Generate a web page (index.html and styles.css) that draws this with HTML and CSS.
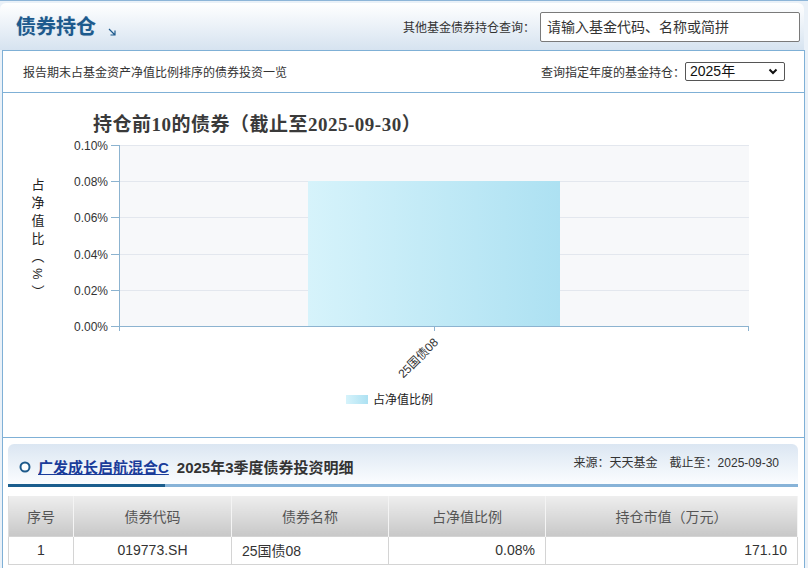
FILE: index.html
```html
<!DOCTYPE html>
<html lang="zh-CN">
<head>
<meta charset="utf-8">
<title>债券持仓</title>
<link rel="stylesheet" href="styles.css">
</head>
<body>
<div class="page">
  <div class="topbar">
    <h1 class="title">债券持仓<svg class="title-arrow" width="8" height="8" viewBox="0 0 8 8"><path d="M1 1 L6.5 6.5 M7 2.5 V7 H2.5" fill="none" stroke="#1d5a8d" stroke-width="1.2"/></svg></h1>
    <div class="search">
      <label class="search-label">其他基金债券持仓查询：</label>
      <input class="search-input" type="text" placeholder="请输入基金代码、名称或简拼">
    </div>
  </div>
  <div class="box">
    <div class="infobar">
      <span class="info-text">报告期末占基金资产净值比例排序的债券投资一览</span>
      <div class="year-query">
        <span class="info-text">查询指定年度的基金持仓：</span>
        <span class="select-wrap">
          <select class="year-select"><option>2025年</option></select>
          <svg class="select-arrow" width="10" height="7" viewBox="0 0 10 7"><path d="M1.5 1.5 L5 5 L8.5 1.5" fill="none" stroke="#111" stroke-width="2"/></svg>
        </span>
      </div>
    </div>
    <div class="chart">
      <svg class="chart-svg" width="801" height="344" viewBox="3 93 801 344">
        <defs>
          <linearGradient id="barGrad" x1="0" x2="1" y1="0" y2="0">
            <stop offset="0" stop-color="#d6f3fb"/>
            <stop offset="1" stop-color="#ade1f2"/>
          </linearGradient>
        </defs>
        <text class="ctitle" x="93" y="131">持仓前10的债券（截止至2025-09-30）</text>
        <rect x="119" y="145" width="630" height="181" fill="#f7f8fa"/>
        <g stroke="#e3e7ee" stroke-width="1">
          <line x1="119" x2="749" y1="145.5" y2="145.5"/>
          <line x1="119" x2="749" y1="181.5" y2="181.5"/>
          <line x1="119" x2="749" y1="217.5" y2="217.5"/>
          <line x1="119" x2="749" y1="254.5" y2="254.5"/>
          <line x1="119" x2="749" y1="290.5" y2="290.5"/>
        </g>
        <rect x="308" y="181" width="252" height="145" fill="url(#barGrad)"/>
        <g stroke="#8cb3d0" stroke-width="1">
          <line x1="119.5" x2="119.5" y1="145" y2="327"/>
          <line x1="119" x2="749" y1="326.5" y2="326.5"/>
          <line x1="111" x2="119" y1="145.5" y2="145.5"/>
          <line x1="111" x2="119" y1="181.5" y2="181.5"/>
          <line x1="111" x2="119" y1="217.5" y2="217.5"/>
          <line x1="111" x2="119" y1="254.5" y2="254.5"/>
          <line x1="111" x2="119" y1="290.5" y2="290.5"/>
          <line x1="111" x2="119" y1="326.5" y2="326.5"/>
          <line x1="119.5" x2="119.5" y1="326" y2="331"/>
          <line x1="434.5" x2="434.5" y1="326" y2="331"/>
          <line x1="748.5" x2="748.5" y1="326" y2="331"/>
        </g>
        <g class="ylabels">
          <text x="108" y="150">0.10%</text>
          <text x="108" y="186">0.08%</text>
          <text x="108" y="222">0.06%</text>
          <text x="108" y="259">0.04%</text>
          <text x="108" y="295">0.02%</text>
          <text x="108" y="331">0.00%</text>
        </g>
        <text class="ytitle" x="37" y="178">占净值比（%）</text>
        <text class="xlabel" x="439" y="343" transform="rotate(-45 439 343)">25国债08</text>
        <rect x="346" y="395" width="22" height="9" fill="url(#barGrad)"/>
        <text class="legend" x="373" y="404">占净值比例</text>
      </svg>
    </div>
    <div class="detail">
      <div class="detail-head">
        <div class="dh-left">
          <svg class="dh-icon" width="12" height="12" viewBox="0 0 12 12"><circle cx="6" cy="6" r="4.5" fill="#fff" stroke="#1e5a8b" stroke-width="2"/></svg>
          <a class="fund-link" href="#">广发成长启航混合C</a>
          <span class="dh-title">2025年3季度债券投资明细</span>
        </div>
        <div class="dh-right">来源：天天基金　截止至：2025-09-30</div>
      </div>
      <div class="dh-bar"><span class="dh-bar-dark"></span></div>
      <table class="bond-table">
        <colgroup>
          <col class="c1"><col class="c2"><col class="c3"><col class="c4"><col class="c5">
        </colgroup>
        <thead>
          <tr><th>序号</th><th>债券代码</th><th>债券名称</th><th>占净值比例</th><th>持仓市值（万元）</th></tr>
        </thead>
        <tbody>
          <tr><td class="center">1</td><td class="center">019773.SH</td><td class="left">25国债08</td><td class="right">0.08%</td><td class="right">171.10</td></tr>
        </tbody>
      </table>
    </div>
  </div>
</div>
</body>
</html>
```
FILE: styles.css
```css
* { box-sizing: border-box; }
html, body { margin: 0; padding: 0; }
body {
  width: 808px;
  height: 568px;
  overflow: hidden;
  background: #eaf1f8;
  font-family: "Liberation Sans", "Noto Sans CJK SC", sans-serif;
  color: #333;
}
.page {
  border-top: 1px solid #8db5d8;
  padding-top: 2px;
}
.topbar {
  height: 47px;
  margin-right: 4px;
  border-radius: 6px 6px 0 0;
  background: linear-gradient(#ffffff, #d6e3f0);
  display: flex;
  align-items: center;
  justify-content: space-between;
  padding-left: 16px;
}
.title {
  margin: 0;
  font-size: 20px;
  line-height: 24px;
  font-weight: bold;
  color: #1d5a8d;
  display: flex;
  align-items: flex-end;
  text-shadow: 0 0 1px rgba(29, 90, 141, 0.3);
}
.title-arrow { margin: 0 0 3px 12px; }
.search { display: flex; align-items: center; }
.search-label { font-size: 12px; color: #333; }
.search-input {
  width: 260px;
  height: 30px;
  margin-left: 5px;
  margin-right: 4px;
  border: 1px solid #7a7a7a;
  border-radius: 2px;
  padding: 0 6px;
  font-size: 14px;
  font-family: "Liberation Sans", "Noto Sans CJK SC", sans-serif;
  background: #fff;
}
.search-input::placeholder { color: #333; }
.box {
  margin-left: 2px;
  width: 803px;
  border: 1px solid #7fb0d6;
  border-bottom: none;
  background: #fff;
  height: 518px;
}
.infobar {
  height: 42px;
  border-bottom: 1px solid #7fb0d6;
  display: flex;
  align-items: center;
  justify-content: space-between;
  padding: 0 19px 0 20px;
}
.info-text { font-size: 12px; color: #333; }
.year-query { display: flex; align-items: center; }
.select-wrap { position: relative; display: inline-block; width: 100px; height: 19px; }
.year-select {
  appearance: none;
  -webkit-appearance: none;
  width: 100px;
  height: 19px;
  border: 1px solid #555;
  border-radius: 2px;
  background: #fff;
  font-size: 14px;
  line-height: 17px;
  padding: 0 0 0 4px;
  font-family: "Liberation Sans", "Noto Sans CJK SC", sans-serif;
  color: #111;
}
.select-arrow { position: absolute; right: 7px; top: 6px; pointer-events: none; }
.chart { border-bottom: 1px solid #7fb0d6; height: 345px; }
.chart-svg { display: block; }
.ctitle {
  font-family: "Liberation Serif", "Noto Sans CJK SC", serif;
  font-weight: bold;
  font-size: 19px;
  letter-spacing: 0.5px;
  fill: #3a3a3a;
}
.ylabels text {
  font-size: 12px;
  text-anchor: end;
  fill: #333;
}
.ytitle {
  writing-mode: vertical-rl;
  font-size: 13px;
  letter-spacing: 5px;
  fill: #222;
}
.xlabel { font-size: 12px; text-anchor: end; fill: #333; }
.legend { font-size: 12px; fill: #222; }
.detail { margin: 6px 6px 0 5px; }
.detail-head {
  height: 40px;
  border-radius: 6px 6px 0 0;
  background: linear-gradient(#dbe6f2, #fbfdff);
  display: flex;
  justify-content: space-between;
  align-items: center;
  padding: 0 19px 0 11px;
}
.dh-left { display: flex; align-items: center; padding-top: 5px; }
.dh-icon { display: block; }
.fund-link {
  margin-left: 7px;
  font-size: 15px;
  font-weight: bold;
  color: #1a3c9a;
  text-decoration: underline;
}
.dh-title { margin-left: 8px; font-size: 15px; font-weight: bold; color: #333; }
.dh-right { font-size: 12px; color: #333; padding-bottom: 5px; }
.dh-bar { height: 3px; background: #87b3d8; display: flex; }
.dh-bar-dark { width: 157px; background: #1b5e8e; }
.bond-table {
  margin-top: 9px;
  width: 789px;
  border-collapse: collapse;
  table-layout: fixed;
  font-size: 14px;
}
.c1 { width: 65px; }
.c2 { width: 158px; }
.c3 { width: 157px; }
.c4 { width: 157px; }
.c5 { width: 252px; }
.bond-table th {
  height: 40px;
  font-weight: normal;
  color: #555;
  background: linear-gradient(#eeeeee, #c8c8c8);
  border: 1px solid #f4f4f4;
  border-top: none;
  border-bottom: none;
}
.bond-table th:first-child { border-left: 1px solid #dddddd; }
.bond-table td {
  height: 28px;
  border: 1px solid #d4d4d4;
  color: #333;
  padding: 0 10px;
}
.center { text-align: center; }
.left { text-align: left; }
.right { text-align: right; }
```
